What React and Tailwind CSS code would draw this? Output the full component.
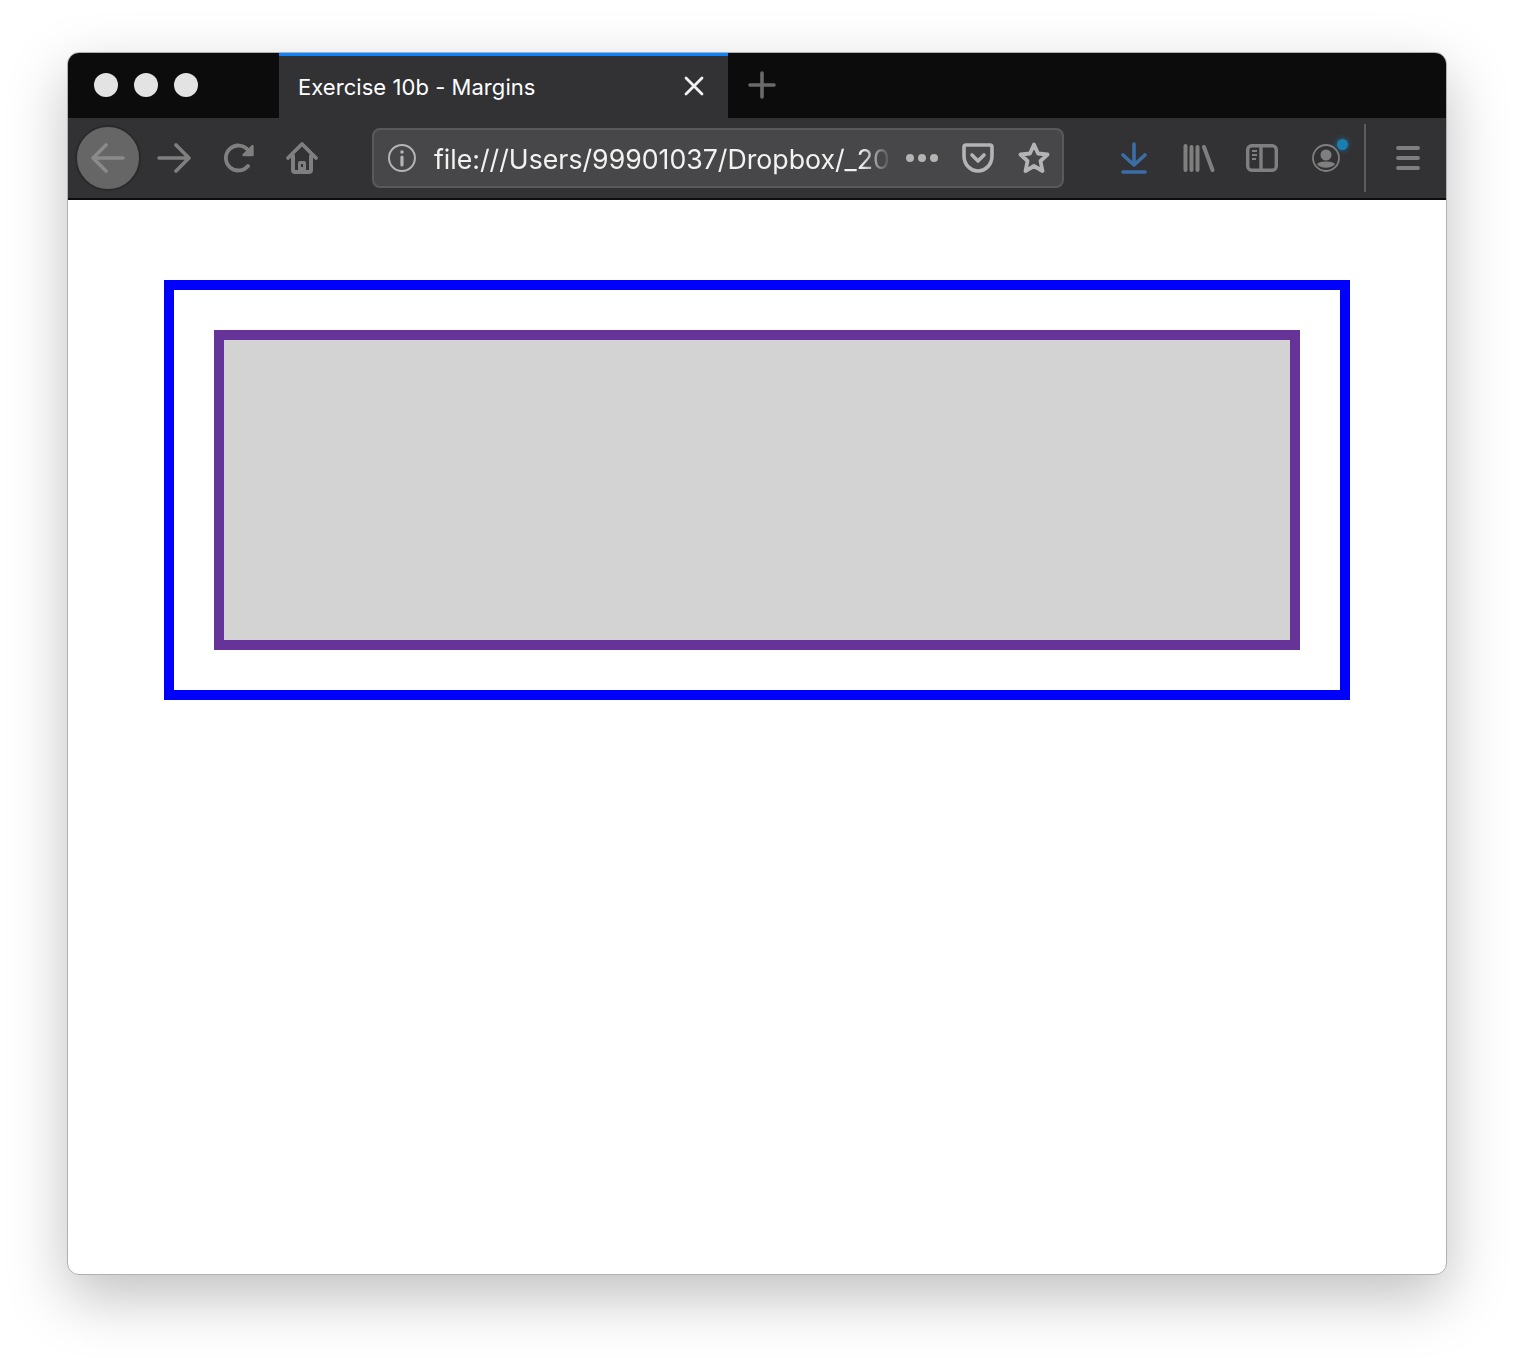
import React from "react";

const font = { fontFamily: "Inter" };

function Dot() {
  return <span className="w-6 h-6 rounded-full bg-[#e3e3e3]" />;
}

function BackIcon() {
  return (
    <svg width="34" height="30" viewBox="0 0 34 30" fill="none" stroke="#8a8a8a" strokeWidth="3.6" strokeLinecap="round" strokeLinejoin="round">
      <path d="M2 15H32M15 2L2 15L15 28" />
    </svg>
  );
}

function ForwardIcon() {
  return (
    <svg width="34" height="30" viewBox="0 0 34 30" fill="none" stroke="#7f7f7f" strokeWidth="3.6" strokeLinecap="round" strokeLinejoin="round">
      <path d="M2 15H32M19 2L32 15L19 28" />
    </svg>
  );
}

function ReloadIcon() {
  return (
    <svg width="32" height="30" viewBox="0 0 32 30" fill="none" stroke="#7f7f7f" strokeWidth="3.8" strokeLinecap="round" strokeLinejoin="round">
      <path d="M24 23A12.5 12.5 0 1 1 24 7" />
      <path d="M28.5 3V12H19.5Z" fill="#7f7f7f" strokeWidth="2.4" />
    </svg>
  );
}

function HomeIcon() {
  return (
    <svg width="34" height="34" viewBox="0 0 34 34" fill="none" stroke="#7f7f7f" strokeWidth="3.8" strokeLinecap="round" strokeLinejoin="round">
      <path d="M3 17L17 3L31 17" />
      <path d="M8 15V29A2 2 0 0 0 10 31H24A2 2 0 0 0 26 29V15" strokeWidth="4" />
      <path d="M13 32V22Q13 20 15 20H19Q21 20 21 22V32Z" fill="#7f7f7f" stroke="none" />
      <rect x="16" y="23" width="2" height="3" fill="#323234" stroke="none" />
    </svg>
  );
}

function InfoIcon() {
  return (
    <svg width="30" height="30" viewBox="0 0 30 30" fill="none" stroke="#b4b4b4" strokeWidth="2">
      <circle cx="15" cy="15" r="13" />
      <path d="M15 14V22" strokeWidth="3.2" strokeLinecap="round" />
      <circle cx="15" cy="9" r="1.8" fill="#b4b4b4" stroke="none" />
    </svg>
  );
}

function PocketIcon() {
  return (
    <svg width="32" height="30" viewBox="0 0 32 30" fill="none" stroke="#b4b4b4" strokeWidth="3.6" strokeLinecap="round" strokeLinejoin="round">
      <path d="M4 2H28A2 2 0 0 1 30 4V13C30 22 23 28 16 28C9 28 2 22 2 13V4A2 2 0 0 1 4 2Z" />
      <path d="M10 12L16 18L22 12" />
    </svg>
  );
}

function StarIcon() {
  return (
    <svg width="32" height="32" viewBox="0 0 32 32" fill="none" stroke="#b4b4b4" strokeWidth="3.8" strokeLinejoin="round">
      <path d="M16 2.5L20 11.5L29.5 12.5L22.5 19L24.5 29L16 24L7.5 29L9.5 19L2.5 12.5L12 11.5Z" />
    </svg>
  );
}

function DownloadIcon() {
  return (
    <svg width="26" height="32" viewBox="0 0 26 32" fill="none" stroke="#3a6ea5" strokeWidth="3.6" strokeLinecap="round" strokeLinejoin="round">
      <path d="M13 2V23M2 13L13 23L24 13" />
      <path d="M2 30H24" />
    </svg>
  );
}

function LibraryIcon() {
  return (
    <svg width="32" height="28" viewBox="0 0 32 28" fill="none" stroke="#7f7f7f" strokeWidth="4" strokeLinecap="round">
      <path d="M2.5 2V26M8.5 3V26M14.5 3V26M21 3L29.5 26" />
    </svg>
  );
}

function SidebarIcon() {
  return (
    <svg width="32" height="28" viewBox="0 0 32 28" fill="none" stroke="#7f7f7f" strokeWidth="3.4">
      <rect x="1.7" y="1.7" width="28.6" height="24.6" rx="4" />
      <path d="M15 2V26" />
      <path d="M6 7H11M6 11H11M6 15H10" strokeWidth="2" />
    </svg>
  );
}

function AccountIcon() {
  return (
    <svg width="28" height="28" viewBox="0 0 28 28" fill="none">
      <circle cx="14" cy="14" r="13" stroke="#7f7f7f" strokeWidth="1.8" />
      <circle cx="14" cy="11" r="5.5" fill="#7f7f7f" />
      <path d="M5 20C7 16.5 21 16.5 23 20C20 25 8 25 5 20Z" fill="#7f7f7f" />
    </svg>
  );
}

function MenuIcon() {
  return (
    <svg width="24" height="24" viewBox="0 0 24 24" stroke="#7f7f7f" strokeWidth="3.8" strokeLinecap="round">
      <path d="M2 2H22M2 12H22M2 22H22" />
    </svg>
  );
}

function TabStrip() {
  return (
    <div className="flex h-[65px] bg-[#0c0c0c]">
      <div className="w-[211px] flex items-center gap-4 pl-[26px] pb-[2px]">
        <Dot />
        <Dot />
        <Dot />
      </div>
      <div className="w-[449px] flex items-center bg-[#323234] border-t-[3px] border-[#0a84ff] pl-[19px] pr-[24px]">
        <span className="text-[22px] tracking-[0.05px] text-white flex-1 whitespace-nowrap">Exercise 10b - Margins</span>
        <svg className="mb-[2px]" width="20" height="20" viewBox="0 0 20 20" stroke="#f2f2f2" strokeWidth="2.8" strokeLinecap="round">
          <path d="M2 2L18 18M18 2L2 18" />
        </svg>
      </div>
      <div className="flex items-center pl-[20px] pb-[2px]">
        <svg width="28" height="28" viewBox="0 0 28 28" stroke="#6a6a6a" strokeWidth="3.6" strokeLinecap="round">
          <path d="M14 2V26M2 14H26" />
        </svg>
      </div>
    </div>
  );
}

function NavBar() {
  return (
    <div className="flex items-center h-[82px] bg-[#323234] border-b-2 border-[#0c0c0c]">
      <div className="ml-[7px] w-[66px] h-[66px] rounded-full bg-[#666666] border-2 border-[#2a2a2a] flex items-center justify-center shrink-0">
        <BackIcon />
      </div>
      <div className="ml-[16px] flex items-center gap-[33px] shrink-0">
        <ForwardIcon />
        <ReloadIcon />
        <div className="-ml-[4px]"><HomeIcon /></div>
      </div>
      <div className="ml-[53px] w-[692px] h-[60px] rounded-lg bg-[#474749] border-2 border-[#59595b] flex items-center pl-[13px] pr-[12px] shrink-0">
        <InfoIcon />
        <div className="ml-[17px] pt-[2px] w-[464px] overflow-hidden whitespace-nowrap text-[26.7px] text-[#f2f2f2] [mask-image:linear-gradient(to_right,black_426px,transparent_458px)]">
          file:///Users/99901037/Dropbox/_20
        </div>
        <div className="ml-[9px] flex gap-[4px]">
          <span className="w-[8px] h-[8px] rounded-full bg-[#b4b4b4]" />
          <span className="w-[8px] h-[8px] rounded-full bg-[#b4b4b4]" />
          <span className="w-[8px] h-[8px] rounded-full bg-[#b4b4b4]" />
        </div>
        <div className="ml-[24px] flex items-center gap-[24px]">
          <PocketIcon />
          <StarIcon />
        </div>
      </div>
      <div className="ml-[57px] flex items-center shrink-0">
        <DownloadIcon />
        <div className="ml-[36px]"><LibraryIcon /></div>
        <div className="ml-[31px]"><SidebarIcon /></div>
        <div className="ml-[34px] relative">
          <AccountIcon />
          <span className="absolute -top-[5px] -right-[8px] w-[11px] h-[11px] rounded-full bg-[#1a7fb0] shadow-[0_0_4px_2px_rgba(26,127,176,0.35)]" />
        </div>
      </div>
      <div className="ml-[24px] w-[2px] h-[68px] bg-[#5c5c5e] shrink-0" />
      <div className="ml-[30px] shrink-0"><MenuIcon /></div>
    </div>
  );
}

export default function App() {
  return (
    <div className="w-[1514px] h-[1358px] bg-white pt-[52px] pl-[67px] overflow-hidden" style={font}>
      <div className="w-[1380px] h-[1223px] rounded-xl overflow-hidden bg-white border border-[#b0b0b0] shadow-[0_22px_60px_rgba(0,0,0,0.25)]">
        <TabStrip />
        <NavBar />
        <div className="pt-[80px] px-[96px]">
          <div className="h-[420px] border-[10px] border-[#0000ff] p-[40px]">
            <div className="h-[320px] border-[10px] border-[#663399] bg-[#d3d3d3]" />
          </div>
        </div>
      </div>
    </div>
  );
}
